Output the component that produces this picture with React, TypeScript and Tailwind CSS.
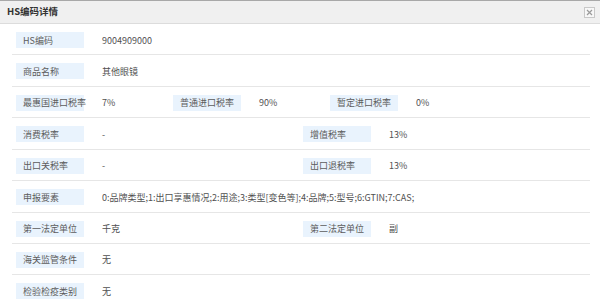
import React from "react";

type Cell = { label: string; value: string };

const rows: { cells: Cell[]; cols: 1 | 2 | 3 }[] = [
  { cols: 1, cells: [{ label: "HS编码", value: "9004909000" }] },
  { cols: 1, cells: [{ label: "商品名称", value: "其他眼镜" }] },
  {
    cols: 3,
    cells: [
      { label: "最惠国进口税率", value: "7%" },
      { label: "普通进口税率", value: "90%" },
      { label: "暂定进口税率", value: "0%" },
    ],
  },
  {
    cols: 2,
    cells: [
      { label: "消费税率", value: "-" },
      { label: "增值税率", value: "13%" },
    ],
  },
  {
    cols: 2,
    cells: [
      { label: "出口关税率", value: "-" },
      { label: "出口退税率", value: "13%" },
    ],
  },
  {
    cols: 1,
    cells: [
      {
        label: "申报要素",
        value: "0:品牌类型;1:出口享惠情况;2:用途;3:类型[变色等];4:品牌;5:型号;6:GTIN;7:CAS;",
      },
    ],
  },
  {
    cols: 2,
    cells: [
      { label: "第一法定单位", value: "千克" },
      { label: "第二法定单位", value: "副" },
    ],
  },
  { cols: 1, cells: [{ label: "海关监管条件", value: "无" }] },
  { cols: 1, cells: [{ label: "检验检疫类别", value: "无" }] },
];

const Field: React.FC<{ cell: Cell; className?: string }> = ({ cell, className }) => (
  <div className={`flex items-center ${className ?? ""}`}>
    <div className="w-[68px] h-[16px] bg-[#e9f3fd] pl-[7px] flex items-center text-[#5c5c5c] whitespace-nowrap">
      {cell.label}
    </div>
    <div className="pl-[18px] text-[#505050] whitespace-nowrap">{cell.value}</div>
  </div>
);

const App: React.FC = () => {
  return (
    <div
      className="w-[600px] h-[306px] overflow-hidden bg-white text-[9px] leading-none"
      style={{ fontFamily: '"Noto Sans CJK SC", "Noto Sans", sans-serif' }}
    >
      {/* header */}
      <div className="h-[24px] border-t border-[#a8a8a8] border-b border-b-[#dcdcdc] bg-[#f0f0f0] flex items-center justify-between pl-[7px] pr-[5px]">
        <span className="font-bold text-[#333] text-[9.5px]">HS编码详情</span>
        <button className="w-[11px] h-[11px] border border-[#c8c8c8] bg-[#f7f7f7] flex items-center justify-center">
          <svg width="7" height="7" viewBox="0 0 7 7">
            <path d="M1 1L6 6M6 1L1 6" stroke="#9a9a9a" strokeWidth="1.2" />
          </svg>
        </button>
      </div>

      {/* body */}
      <div className="ml-[12px] mr-[10px]">
        {rows.map((row, i) => (
          <div
            key={i}
            className="flex pl-[4px] pt-[8px] pb-[6.43px] border-b border-[#e6e6e6]"
          >
            {row.cols === 3 &&
              row.cells.map((c, j) => (
                <Field key={j} cell={c} className="w-[157px]" />
              ))}
            {row.cols === 2 &&
              row.cells.map((c, j) => (
                <Field key={j} cell={c} className="w-1/2" />
              ))}
            {row.cols === 1 && <Field cell={row.cells[0]} />}
          </div>
        ))}
      </div>
    </div>
  );
};

export default App;
